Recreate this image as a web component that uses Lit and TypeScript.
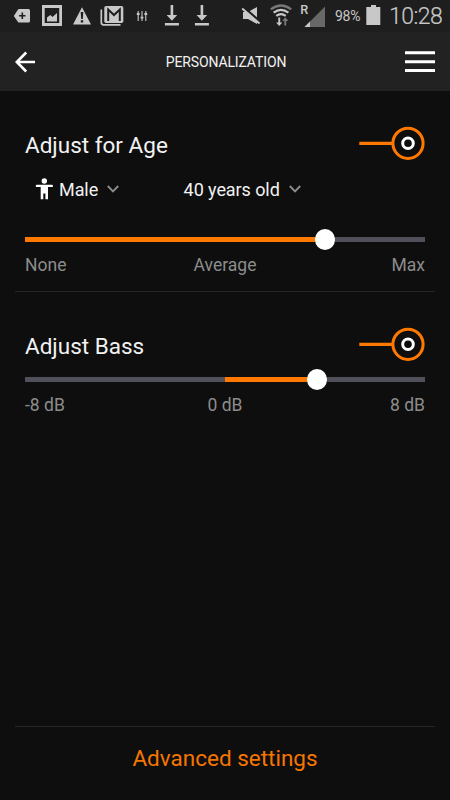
import { LitElement, html, svg, css } from "lit";
import { customElement, property } from "lit/decorators.js";

@customElement("status-bar")
class StatusBar extends LitElement {
  static styles = css`
    :host { display: flex; height: 32px; background: #1e1e1e; color: #c8c8c8; }
    svg { display: block; flex: none; }
    .battery { width: 30px; font-size: 14px; line-height: 33px; letter-spacing: -0.3px; white-space: nowrap; }
    .clock { padding-left: 1px; font-size: 23px; font-weight: 300; -webkit-text-stroke: 0.2px #c8c8c8; line-height: 33px; letter-spacing: -0.5px; white-space: nowrap; }
  `;

  private slotIcon(x: number, w: number, art: unknown) {
    return html`<svg width=${w} height="32" viewBox="${x} 0 ${w} 32" fill="#c8c8c8">${art}</svg>`;
  }

  private download(cx: number) {
    return svg`<path d="M${cx - 1.3} 5h2.6v10h4L${cx} 20.7L${cx - 5.3} 15h4zM${cx - 7} 23h14v2.5h-14z"/>`;
  }

  render() {
    return html`
      ${this.slotIcon(0, 36, svg`
        <path d="M13.8 16L18 9.6Q18.4 9 19.2 9H28.5Q30 9 30 10.5V21Q30 22.5 28.5 22.5H19.2Q18.4 22.5 18 21.9Z"/>
        <path d="M22.3 12.5v6.4M19.1 15.7h6.4" stroke="#1e1e1e" stroke-width="1.6"/>`)}
      ${this.slotIcon(36, 31, svg`
        <path fill-rule="evenodd" d="M42 5h20v21H42zM44.7 8v15h14.5V8z"/>
        <path d="M47 21.5V17.5L50.3 15L52.5 17L57 13V21.5Z"/>`)}
      ${this.slotIcon(67, 30, svg`
        <path d="M82 7.2L91 24.5H73Z"/>
        <path d="M80.7 12h2.6l-.5 7h-1.6zM80.8 20.2h2.4v2.3h-2.4z" fill="#1e1e1e"/>`)}
      ${this.slotIcon(97, 34, svg`
        <path d="M101.3 9.5V22.5Q101.3 24.8 103.5 24.8H120.5" fill="none" stroke="#c8c8c8" stroke-width="1.7"/>
        <rect x="104.3" y="6" width="19" height="17" rx="1.8"/>
        <path d="M108.2 21V9.5L114 15L119.8 9.5V21" fill="none" stroke="#1e1e1e" stroke-width="2"/>`)}
      ${this.slotIcon(131, 26, svg`
        <path d="M138.2 11v10M142 11v10M145.8 11v10" stroke="#c8c8c8" stroke-width="1.1"/>
        <path d="M136.8 14h2.8M140.6 17.7h2.8M144.4 14h2.8" stroke="#c8c8c8" stroke-width="1.8"/>`)}
      ${this.slotIcon(157, 30, this.download(171.9))}
      ${this.slotIcon(187, 50, this.download(201.9))}
      ${this.slotIcon(237, 29, svg`
        <path d="M243 12h5l9-5v17l-9-5h-5z"/>
        <path d="M243.2 6.8L260.8 22.2" stroke="#1e1e1e" stroke-width="2.2"/>
        <path d="M242.2 8.4L259.5 23.6" stroke="#c8c8c8" stroke-width="2"/>`)}
      ${this.slotIcon(266, 30, svg`
        <g fill="none" stroke-width="2.2">
          <path d="M270.8 9.4Q281 1.6 291.2 9.4" stroke="#777"/>
          <path d="M273.6 12.7Q281 7 288.4 12.7M276.3 15.8Q281 12.3 285.7 15.8" stroke="#c8c8c8"/>
        </g>
        <path d="M278.3 17.5h1.9v5h2.1L279.2 26l-3.1-3.5h2.2z"/>
        <path d="M284.3 25.5h1.9V21h2.2l-3.1-3.7-3.1 3.7h2.1z" fill="#777"/>`)}
      ${this.slotIcon(296, 39, svg`
        <text x="300.3" y="14.4" font-size="12.5" font-weight="500" textLength="8" lengthAdjust="spacingAndGlyphs">R</text>
        <path d="M304.5 27L325 6.6V27Z" fill="#686868"/>
        <path d="M304.5 27L310 21.5V27Z"/>`)}
      <div class="battery">98%</div>
      ${this.slotIcon(365, 23, svg`<path d="M366.3 7H371V5h5v2h4.3v18h-14z"/>`)}
      <div class="clock">10:28</div>
    `;
  }
}

@customElement("ring-switch")
class RingSwitch extends LitElement {
  static styles = css`
    :host { display: block; width: 66px; height: 34px; }
    svg { display: block; }
  `;
  render() {
    return html`<svg width="66" height="34" viewBox="0 0 66 34" fill="none">
      <path d="M.3 17.3H33" stroke="#ff7800" stroke-width="3.3"/>
      <circle cx="49" cy="17.3" r="15.1" stroke="#ff7800" stroke-width="3"/>
      <circle cx="49" cy="17.3" r="5.3" stroke="#fff" stroke-width="3"/>
    </svg>`;
  }
}

@customElement("range-slider")
class RangeSlider extends LitElement {
  @property({ type: Number }) from = 0;
  @property({ type: Number }) value = 0;
  @property({ type: Array }) labels: string[] = [];

  static styles = css`
    :host { display: block; }
    .rail { position: relative; height: 5px; background: #50505a; }
    .fill { position: absolute; top: 0; bottom: 0; background: #ff7800; }
    .knob { position: absolute; top: -8px; width: 20px; height: 20.5px; margin-left: -10px; border-radius: 50%; background: #fff; }
    .labels { display: grid; grid-template-columns: 1fr auto 1fr; margin-top: 11px; font-size: 17.5px; line-height: 24px; color: #8c8c8c; }
    .labels span:last-child { text-align: right; }
  `;
  render() {
    return html`
      <div class="rail">
        <div class="fill" style="left:${this.from}%;width:${this.value - this.from}%"></div>
        <div class="knob" style="left:${this.value}%"></div>
      </div>
      <div class="labels">${this.labels.map((l) => html`<span>${l}</span>`)}</div>
    `;
  }
}

@customElement("app-root")
class AppRoot extends LitElement {
  static styles = css`
    :host { display: flex; flex-direction: column; width: 450px; height: 800px; overflow: hidden; background: #0e0e0e; color: #f2f2f2; font-family: Roboto, "Liberation Sans", sans-serif; }
    svg { display: block; flex: none; }
    header { display: grid; grid-template-columns: 1fr auto 1fr; align-items: center; height: 59px; padding: 0 15px; background: #222; }
    header h1 { margin: 0; padding-left: 2px; font-size: 14px; font-weight: 400; line-height: 20px; letter-spacing: -0.13px; }
    .menu { justify-self: end; }
    main { flex: 1; }
    section { margin: 0 15px; padding: 0 10px; }
    .age { height: 201px; border-bottom: 1px solid #262626; box-sizing: border-box; padding-top: 35px; }
    .bass { padding-top: 35px; }
    .title { display: flex; justify-content: space-between; height: 34px; }
    h2 { margin: 2px 0 0; font-size: 22.5px; font-weight: 400; line-height: 34px; }
    .choices { display: flex; align-items: center; height: 24px; margin-top: 17px; padding-left: 10px; font-size: 18px; letter-spacing: -0.08px; }
    .choices .male { margin-left: 5px; }
    .choices .years { margin-left: 64.5px; }
    .choices .chevron { margin-left: 9px; }
    .age range-slider { margin-top: 36px; }
    .bass range-slider { margin-top: 16px; }
    footer { margin: 0 15px; height: 74px; box-sizing: border-box; border-top: 1px solid #262626; padding-top: 14px; text-align: center; font-size: 22.5px; line-height: 34px; color: #f57600; }
  `;

  private chevron() {
    return html`<svg class="chevron" width="12" height="8" viewBox="0 0 12 8" fill="none"><path d="M.8 1L6 6.3L11.2 1" stroke="#8c8c8c" stroke-width="1.9"/></svg>`;
  }

  render() {
    return html`
      <status-bar></status-bar>
      <header>
        <svg width="21" height="22" viewBox="0 0 21 22" fill="none" stroke="#fff" stroke-width="2.6"><path d="M20 11H2M11.2 1.5L1.8 11L11.2 20.5"/></svg>
        <h1>PERSONALIZATION</h1>
        <svg class="menu" width="30" height="22" viewBox="0 0 30 22" fill="#fff"><path d="M0 .2h30v3H0zM0 9.2h30v3H0zM0 18h30v3H0z"/></svg>
      </header>
      <main>
        <section class="age">
          <div class="title"><h2>Adjust for Age</h2><ring-switch></ring-switch></div>
          <div class="choices">
            <svg width="19" height="22" viewBox="0 0 19 22" fill="#fff"><circle cx="9.3" cy="3" r="2.7"/><path d="M2 6.7H16.7Q18 6.7 18 7.9T16.7 9.1H13V21.2H10.4V15.5H8.3V21.2H5.7V9.1H2Q.7 9.1 .7 7.9T2 6.7Z"/></svg>
            <span class="male">Male</span>${this.chevron()}
            <span class="years">40 years old</span>${this.chevron()}
          </div>
          <range-slider .value=${75} .labels=${["None", "Average", "Max"]}></range-slider>
        </section>
        <section class="bass">
          <div class="title"><h2>Adjust Bass</h2><ring-switch></ring-switch></div>
          <range-slider .from=${50} .value=${73} .labels=${["-8 dB", "0 dB", "8 dB"]}></range-slider>
        </section>
      </main>
      <footer>Advanced settings</footer>
    `;
  }
}
